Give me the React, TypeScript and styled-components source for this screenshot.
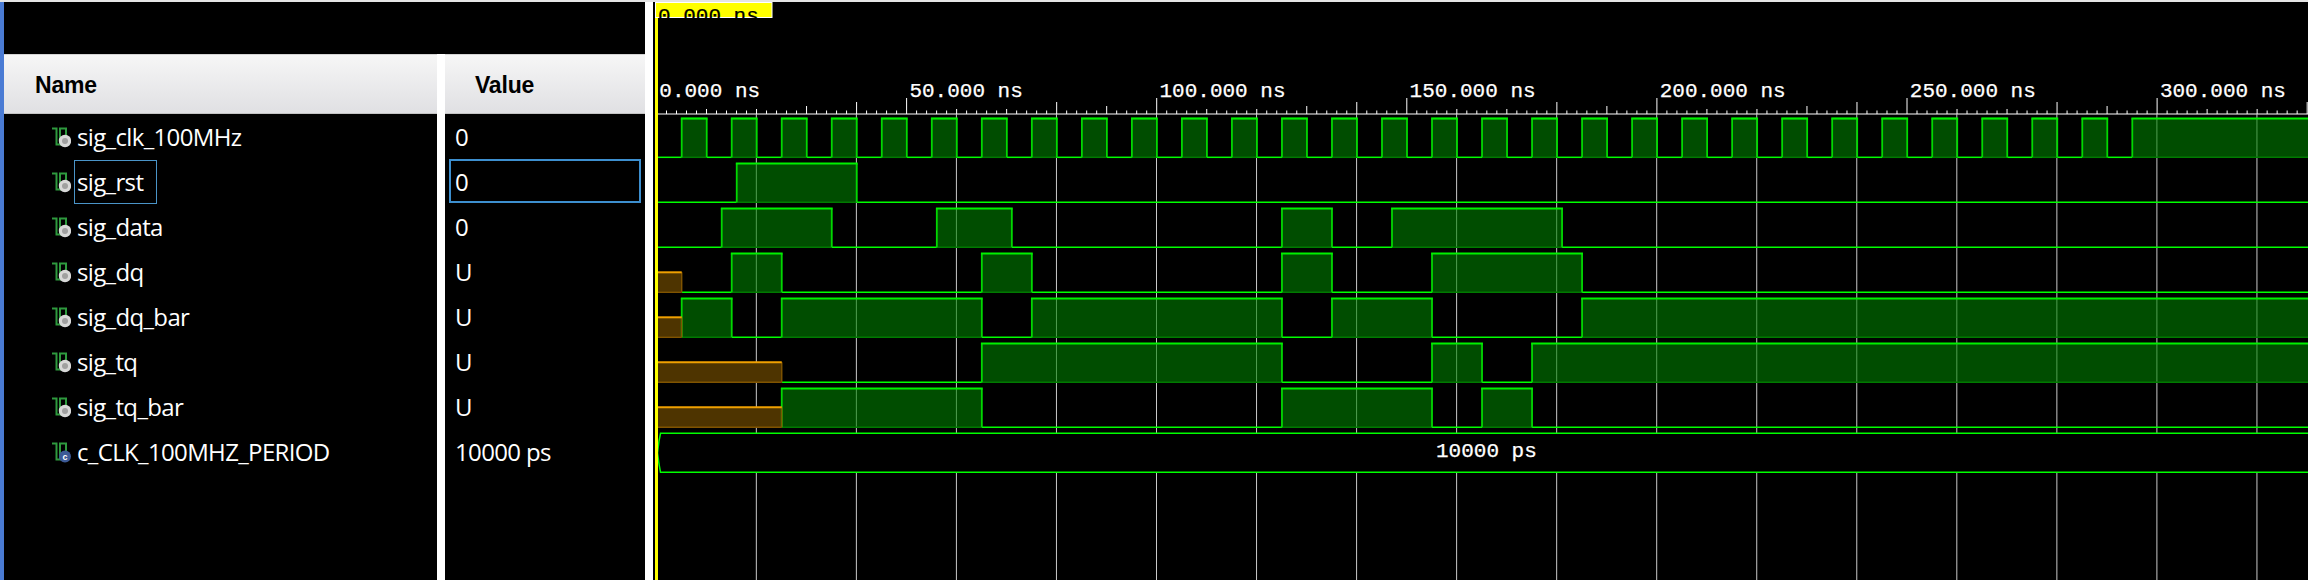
import React from 'react';
import styled, { createGlobalStyle } from 'styled-components';

const GlobalStyle = createGlobalStyle`
  html, body {
    margin: 0;
    padding: 0;
    background: #000;
    overflow: hidden;
  }
`;

const Page = styled.div`
  width: 2308px;
  height: 580px;
  display: flex;
  flex-direction: column;
  background: #000;
  font-family: 'Open Sans', 'Liberation Sans', sans-serif;
`;

const TopStrip = styled.div`
  height: 2px;
  background: #e4e4e4;
`;

const Main = styled.div`
  flex: 1;
  display: flex;
  min-height: 0;
`;

const BlueEdge = styled.div`
  width: 4px;
  background: #4a7bd4;
`;

const Column = styled.div<{ $width: number }>`
  width: ${(p) => p.$width}px;
  padding-top: 52px;
  display: flex;
  flex-direction: column;
`;

const Divider = styled.div<{ $inset?: boolean }>`
  width: 8px;
  background: #fff;
  margin-top: ${(p) => (p.$inset ? 52 : 0)}px;
`;

const HeaderCell = styled.div<{ $indent: number }>`
  height: 60px;
  box-sizing: border-box;
  display: flex;
  align-items: center;
  padding-left: ${(p) => p.$indent}px;
  padding-top: 2px;
  background: linear-gradient(#f6f6f6, #e0e0e3);
  border-top: 1px solid #d4d4d4;
  border-bottom: 1px solid #c4c4c4;
  color: #000;
  font-family: 'Liberation Sans', sans-serif;
  font-weight: 700;
  font-size: 23px;
  letter-spacing: -0.2px;
`;

const NameRow = styled.div`
  height: 45px;
  display: flex;
  align-items: center;
  padding-left: 47px;
`;

const NameLabel = styled.span<{ $selected: boolean }>`
  height: 44px;
  box-sizing: border-box;
  display: flex;
  align-items: center;
  margin-left: 3px;
  padding-left: 2px;
  padding-right: ${(p) => (p.$selected ? 13 : 0)}px;
  border: 1px solid ${(p) => (p.$selected ? '#4a94c8' : 'transparent')};
  color: #fff;
  font-size: 24px;
  letter-spacing: -0.65px;
`;

const ValueRow = styled.div<{ $selected: boolean }>`
  height: 44px;
  margin: 0 4px 1px 4px;
  box-sizing: border-box;
  display: flex;
  align-items: center;
  padding-left: 4px;
  border: 2px solid ${(p) => (p.$selected ? '#3d8fcf' : 'transparent')};
  color: #fff;
  font-size: 24px;
  letter-spacing: -0.65px;
`;

const WaveSvg = styled.svg`
  display: block;
  flex: 1;
`;

const RulerText = styled.text`
  font-family: 'Liberation Mono', monospace;
  font-size: 21px;
  fill: #fff;
  stroke: #fff;
  stroke-width: 0.25px;
`;

const CursorText = styled(RulerText)`
  fill: #000;
  stroke: #000;
`;

const ConstGlyph = styled.text`
  font-family: 'Liberation Sans', sans-serif;
  font-size: 9px;
  font-weight: 700;
  fill: #fff;
`;

const COLOR = {
  grid: '#c9c9c9',
  fill: '#008000',
  top: '#00f000',
  side: '#00d800',
  bottom: '#007a00',
  low: '#00ff00',
  uFill: '#4e3400',
  uTop: '#f0a000',
  uBottom: '#805400',
};

const x = (ns: number) => 656.3 + ns * 5.002;
const edge = (ns: number) => x(ns) + 0.4;
const END_NS = 331;

type Signal = {
  name: string;
  value: string;
  unknownUntil?: number;
  highs: [number, number][];
};

const clockHighs: [number, number][] = [];
for (let t = 5; t <= 285; t += 10) clockHighs.push([t, t + 5]);
clockHighs.push([295, END_NS]);

const SIGNALS: Signal[] = [
  { name: 'sig_clk_100MHz', value: '0', highs: clockHighs },
  { name: 'sig_rst', value: '0', highs: [[16, 40]] },
  { name: 'sig_data', value: '0', highs: [[13, 35], [56, 71], [125, 135], [147, 181]] },
  { name: 'sig_dq', value: 'U', unknownUntil: 5, highs: [[15, 25], [65, 75], [125, 135], [155, 185]] },
  { name: 'sig_dq_bar', value: 'U', unknownUntil: 5, highs: [[5, 15], [25, 65], [75, 125], [135, 155], [185, END_NS]] },
  { name: 'sig_tq', value: 'U', unknownUntil: 25, highs: [[65, 125], [155, 165], [175, END_NS]] },
  { name: 'sig_tq_bar', value: 'U', unknownUntil: 25, highs: [[25, 65], [125, 155], [165, 175]] },
];

const GRID_NS = Array.from({ length: 16 }, (_, i) => 20 + i * 20);
const RULER_LABELS = [0, 50, 100, 150, 200, 250, 300];

// top of the ruler tick for each 10 ns position, the rest are short ticks
const TICK_TOPS: Record<number, number> = {
  30: 106, 40: 102, 50: 98, 80: 102, 90: 106, 100: 98, 130: 106, 140: 102, 150: 98,
  180: 102, 190: 106, 200: 98, 230: 106, 240: 102, 250: 98, 280: 102, 290: 106, 300: 98, 330: 102,
};

const SignalIcon: React.FC<{ constant?: boolean }> = ({ constant }) => (
  <svg width="20" height="22" viewBox="0 0 20 22">
    <path d="M1 2.5H5.5V18.5H9V2.5H15V12" fill="none" stroke="#2e9a3e" strokeWidth="2" />
    {constant ? (
      <>
        <circle cx="14" cy="15.5" r="6" fill="#3c5a96" />
        <ConstGlyph x="11.5" y="18.5">c</ConstGlyph>
      </>
    ) : (
      <>
        <circle cx="14" cy="15" r="6.2" fill="#d8d8d8" />
        <circle cx="14" cy="15" r="3" fill="#a0a0a0" />
      </>
    )}
  </svg>
);

const Trace: React.FC<{ signal: Signal; row: number; layer: 'fill' | 'line' }> = ({ signal, row, layer }) => {
  const high = 118.5 + row * 45;
  const low = 157.3 + row * 45;
  const start = signal.unknownUntil ?? 0;

  if (layer === 'fill') {
    return (
      <g>
        {signal.highs.map(([a, b]) => (
          <rect key={a} x={edge(a)} y={high} width={edge(b) - edge(a)} height={low - high} fill={COLOR.fill} opacity={0.6} />
        ))}
        {signal.unknownUntil ? (
          <rect x={x(0)} y={low - 20} width={edge(start) - x(0)} height={20} fill={COLOR.uFill} />
        ) : null}
      </g>
    );
  }

  // low stretches are whatever the high pulses leave open
  const lows: [number, number][] = [];
  let cursor = start;
  signal.highs.forEach(([a, b]) => {
    if (a > cursor) lows.push([cursor, a]);
    cursor = b;
  });
  if (cursor < END_NS) lows.push([cursor, END_NS]);

  return (
    <g fill="none">
      {lows.map(([a, b]) => (
        <line key={a} x1={edge(a)} x2={edge(b)} y1={low} y2={low} stroke={COLOR.low} strokeWidth={1.5} />
      ))}
      {signal.highs.map(([a, b]) => (
        <g key={a}>
          <line x1={edge(a)} x2={edge(b)} y1={low} y2={low} stroke={COLOR.bottom} strokeWidth={1.5} />
          <line x1={edge(a)} x2={edge(a)} y1={high} y2={low} stroke={COLOR.side} strokeWidth={1.8} />
          <line x1={edge(b)} x2={edge(b)} y1={high} y2={low} stroke={COLOR.side} strokeWidth={1.8} />
          <line x1={edge(a) - 0.9} x2={edge(b) + 0.9} y1={high} y2={high} stroke={COLOR.top} strokeWidth={2.2} />
        </g>
      ))}
      {signal.unknownUntil ? (
        <g>
          <line x1={x(0)} x2={edge(start)} y1={low} y2={low} stroke={COLOR.uBottom} strokeWidth={1.4} />
          <line x1={edge(start)} x2={edge(start)} y1={low - 20} y2={low} stroke={COLOR.uBottom} strokeWidth={1.4} />
          <line x1={x(0)} x2={edge(start)} y1={low - 20} y2={low - 20} stroke={COLOR.uTop} strokeWidth={2} />
        </g>
      ) : null}
    </g>
  );
};

const Ruler: React.FC = () => {
  const ticks: number[] = [];
  for (let t = 0; t <= 330; t += 2) ticks.push(t);
  return (
    <g>
      <line x1={658} x2={2308} y1={114} y2={114} stroke="#fff" strokeWidth={1.2} />
      {ticks.map((t) => (
        <line
          key={t}
          x1={x(t) + 0.2}
          x2={x(t) + 0.2}
          y1={TICK_TOPS[t] ?? (t % 10 === 0 ? 109 : 110.5)}
          y2={114}
          stroke="#fff"
          strokeWidth={1}
        />
      ))}
      {RULER_LABELS.map((t) => (
        <RulerText key={t} x={x(t) + 3} y={97}>{`${t}.000 ns`}</RulerText>
      ))}
    </g>
  );
};

const Waves: React.FC = () => (
  <WaveSvg viewBox="653 2 1655 578" width="1655" height="578">
    <defs>
      <clipPath id="cursor-label">
        <rect x="656" y="3" width="116" height="15" />
      </clipPath>
    </defs>
    <Ruler />
    {GRID_NS.map((t) => (
      <line key={t} x1={x(t)} x2={x(t)} y1={114} y2={580} stroke={COLOR.grid} strokeWidth={1} />
    ))}
    {SIGNALS.map((s, i) => <Trace key={s.name} signal={s} row={i} layer="fill" />)}
    {SIGNALS.map((s, i) => <Trace key={s.name} signal={s} row={i} layer="line" />)}
    <path
      d="M2308 433.3H660.5L659 441L657.5 452.8L659 464L660.5 472.3H2308"
      fill="#000"
      stroke={COLOR.low}
      strokeWidth={1.5}
    />
    <RulerText x={1436} y={457}>10000 ps</RulerText>
    <rect x="655" y="18" width="3" height="562" fill="#ffff00" />
    <rect x="655.5" y="2.5" width="116.5" height="15" fill="#ffff00" stroke="#fff" strokeWidth={1} />
    <CursorText x={658} y={22} clipPath="url(#cursor-label)">0.000 ns</CursorText>
  </WaveSvg>
);

const App: React.FC = () => (
  <Page>
    <GlobalStyle />
    <TopStrip />
    <Main>
      <BlueEdge />
      <Column $width={433}>
        <HeaderCell $indent={31}>Name</HeaderCell>
        {SIGNALS.map((s, i) => (
          <NameRow key={s.name}>
            <SignalIcon />
            <NameLabel $selected={i === 1}>{s.name}</NameLabel>
          </NameRow>
        ))}
        <NameRow>
          <SignalIcon constant />
          <NameLabel $selected={false}>c_CLK_100MHZ_PERIOD</NameLabel>
        </NameRow>
      </Column>
      <Divider $inset />
      <Column $width={200}>
        <HeaderCell $indent={30}>Value</HeaderCell>
        {SIGNALS.map((s, i) => (
          <ValueRow key={s.name} $selected={i === 1}>{s.value}</ValueRow>
        ))}
        <ValueRow $selected={false}>10000 ps</ValueRow>
      </Column>
      <Divider />
      <Waves />
    </Main>
  </Page>
);

export default App;
